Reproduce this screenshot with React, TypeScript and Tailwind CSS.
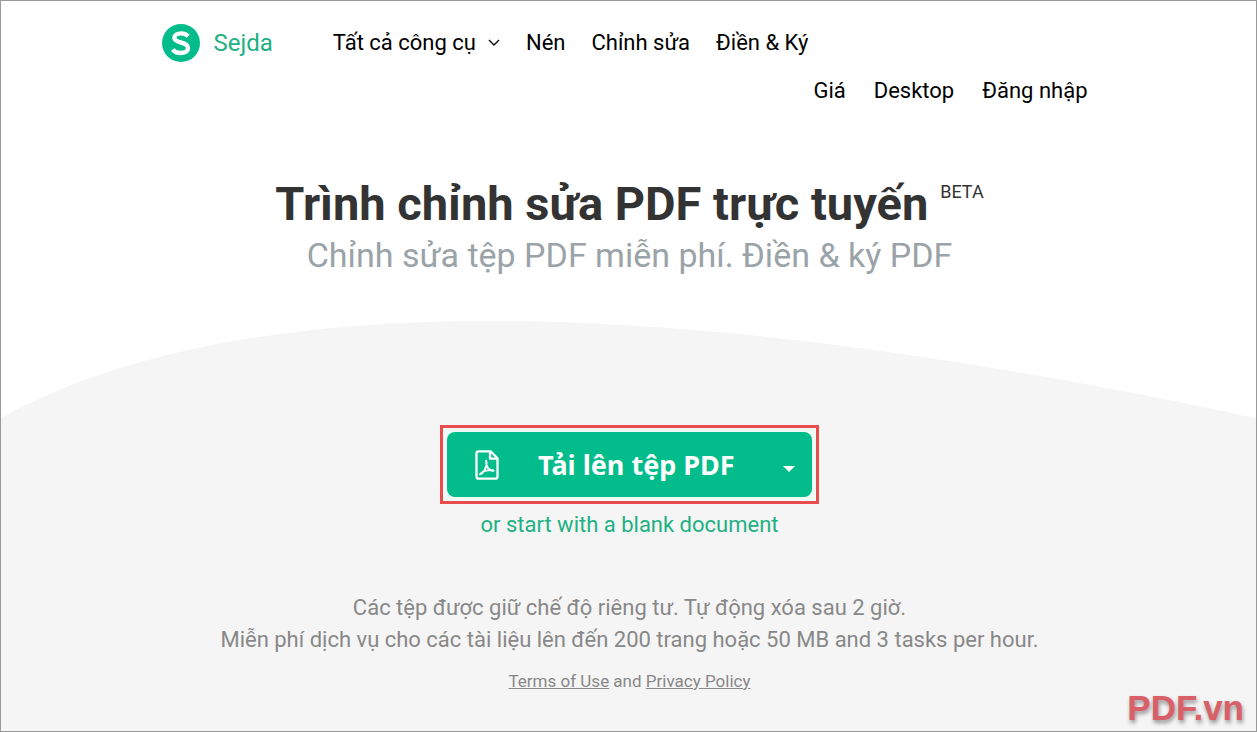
import type { ReactNode } from "react";

const tools = ["Nén", "Chỉnh sửa", "Điền & Ký"];
const account = ["Giá", "Desktop", "Đăng nhập"];

function NavLink({ children }: { children: ReactNode }) {
  return (
    <a href="#" className="flex items-center whitespace-nowrap leading-12">
      {children}
    </a>
  );
}

function Logo() {
  return (
    <a href="#" className="mr-[60px] flex items-center gap-[14px] text-2xl leading-12 text-[#21b183]">
      <svg viewBox="0 0 38 38" className="size-[38px]" aria-hidden="true">
        <circle cx="19" cy="19" r="19" fill="#02bc8b" />
        <path
          d="M26.2 12.2C24.4 10.4 22 9.4 19.2 9.4C15.2 9.4 12.4 11.2 12.4 13.8C12.4 16.6 15 17.5 18.8 18.5C23 19.6 26 20.8 26 24C26 27.2 22.8 29 18.8 29C15.4 29 12.4 27.8 10.6 25.6"
          fill="none"
          stroke="#fff"
          strokeWidth="4.4"
        />
      </svg>
      Sejda
    </a>
  );
}

function Header() {
  return (
    <header className="mx-auto w-full max-w-[934px] pt-[18px] pr-2 text-[22px] text-black">
      <nav className="flex flex-wrap items-center">
        <Logo />
        <div className="flex gap-[26px]">
          <button type="button" className="flex items-center gap-3 whitespace-nowrap leading-12">
            Tất cả công cụ
            <svg viewBox="0 0 12 8" className="h-2 w-3" fill="none" stroke="currentColor" strokeWidth="1.3" aria-hidden="true">
              <path d="M1 1L6 6L11 1" />
            </svg>
          </button>
          {tools.map((item) => (
            <NavLink key={item}>{item}</NavLink>
          ))}
        </div>
      </nav>
      <nav className="flex justify-end gap-7">
        {account.map((item) => (
          <NavLink key={item}>{item}</NavLink>
        ))}
      </nav>
    </header>
  );
}

function PdfIcon() {
  return (
    <svg viewBox="0 0 24 30" className="h-[30px] w-6" fill="none" stroke="currentColor" strokeWidth="2.3" strokeLinejoin="round" aria-hidden="true">
      <path d="M3.5 1.3H15.5L22.5 8.3V26.5Q22.5 28.7 20.3 28.7H3.7Q1.5 28.7 1.5 26.5V3.3Q1.5 1.3 3.5 1.3Z" />
      <path d="M15 1.5V8.7H22.3" />
      <path
        d="M11.2 10.6C10.9 13 11.4 15.4 12.6 17.4C14 19.6 16 20.6 18.6 20.8M11.6 12.4C11.8 15.4 11 18 9.4 20.6C8.4 22.4 7 23.8 4.8 24.4M5.6 23.6C8 21.4 11.4 19.6 18 20.2"
        strokeWidth="1.9"
        strokeLinecap="round"
      />
    </svg>
  );
}

function Upload() {
  return (
    <div className="max-w-full border-3 border-[#e84c4c] bg-[#eefaf6] p-1">
      <div className="flex h-[65px] w-[365px] max-w-full items-center rounded-lg bg-[#02bc8b] text-white">
        <button type="button" className="flex h-full min-w-0 flex-1 items-center gap-[39px] pl-7">
          <PdfIcon />
          <span className="whitespace-nowrap font-['Noto_Sans',sans-serif] text-[27px] leading-9 font-bold">
            Tải lên tệp PDF
          </span>
        </button>
        <button type="button" aria-label="Upload options" className="flex h-full shrink-0 items-center pt-2 pr-[17px] pl-3">
          <svg viewBox="0 0 12 6" className="h-[6px] w-3" fill="currentColor" aria-hidden="true">
            <path d="M0 0H12L6 6Z" />
          </svg>
        </button>
      </div>
    </div>
  );
}

export default function App() {
  return (
    <div className="relative flex min-h-screen flex-col border border-[#999] bg-white font-[Roboto,sans-serif]">
      <Header />

      <section className="pt-[61px] pr-4 pl-[18px] text-center">
        <h1 className="flex justify-center gap-3 text-[47px] leading-[56px] font-bold text-[#333]">
          Trình chỉnh sửa PDF trực tuyến
          <sup className="top-0 text-lg leading-8 font-normal">BETA</sup>
        </h1>
        <h2 className="text-[34px] leading-[46px] text-[#9aa3a8]">Chỉnh sửa tệp PDF miễn phí. Điền &amp; ký PDF</h2>
      </section>

      <svg viewBox="0 0 1255 97" preserveAspectRatio="none" className="mt-[43px] h-[97px] w-full shrink-0 text-[#f5f5f5]" aria-hidden="true">
        <path d="M0 97Q351 -97 1255 97Z" fill="currentColor" />
      </svg>

      <main className="flex flex-1 flex-col items-center bg-[#f5f5f5] pt-[7px] pr-4 pl-[18px] text-center">
        <Upload />
        <a href="#" className="mt-[5px] text-[22px] leading-8 text-[#21b183]">
          or start with a blank document
        </a>
        <p className="mt-[51px] text-[22px] leading-8 text-[#888]">
          Các tệp được giữ chế độ riêng tư. Tự động xóa sau 2 giờ.
          <br />
          Miễn phí dịch vụ cho các tài liệu lên đến 200 trang hoặc 50 MB and 3 tasks per hour.
        </p>
        <p className="mt-[13px] text-[17px] leading-6 text-[#888]">
          <a href="#" className="underline">Terms of Use</a> and <a href="#" className="underline">Privacy Policy</a>
        </p>
      </main>

      <div className="absolute right-3 bottom-[5px] font-['Liberation_Sans',sans-serif] text-[35px] leading-9 font-bold text-[#d95f69] [text-shadow:1px_3px_4px_#0006]">
        PDF.vn
      </div>
    </div>
  );
}
